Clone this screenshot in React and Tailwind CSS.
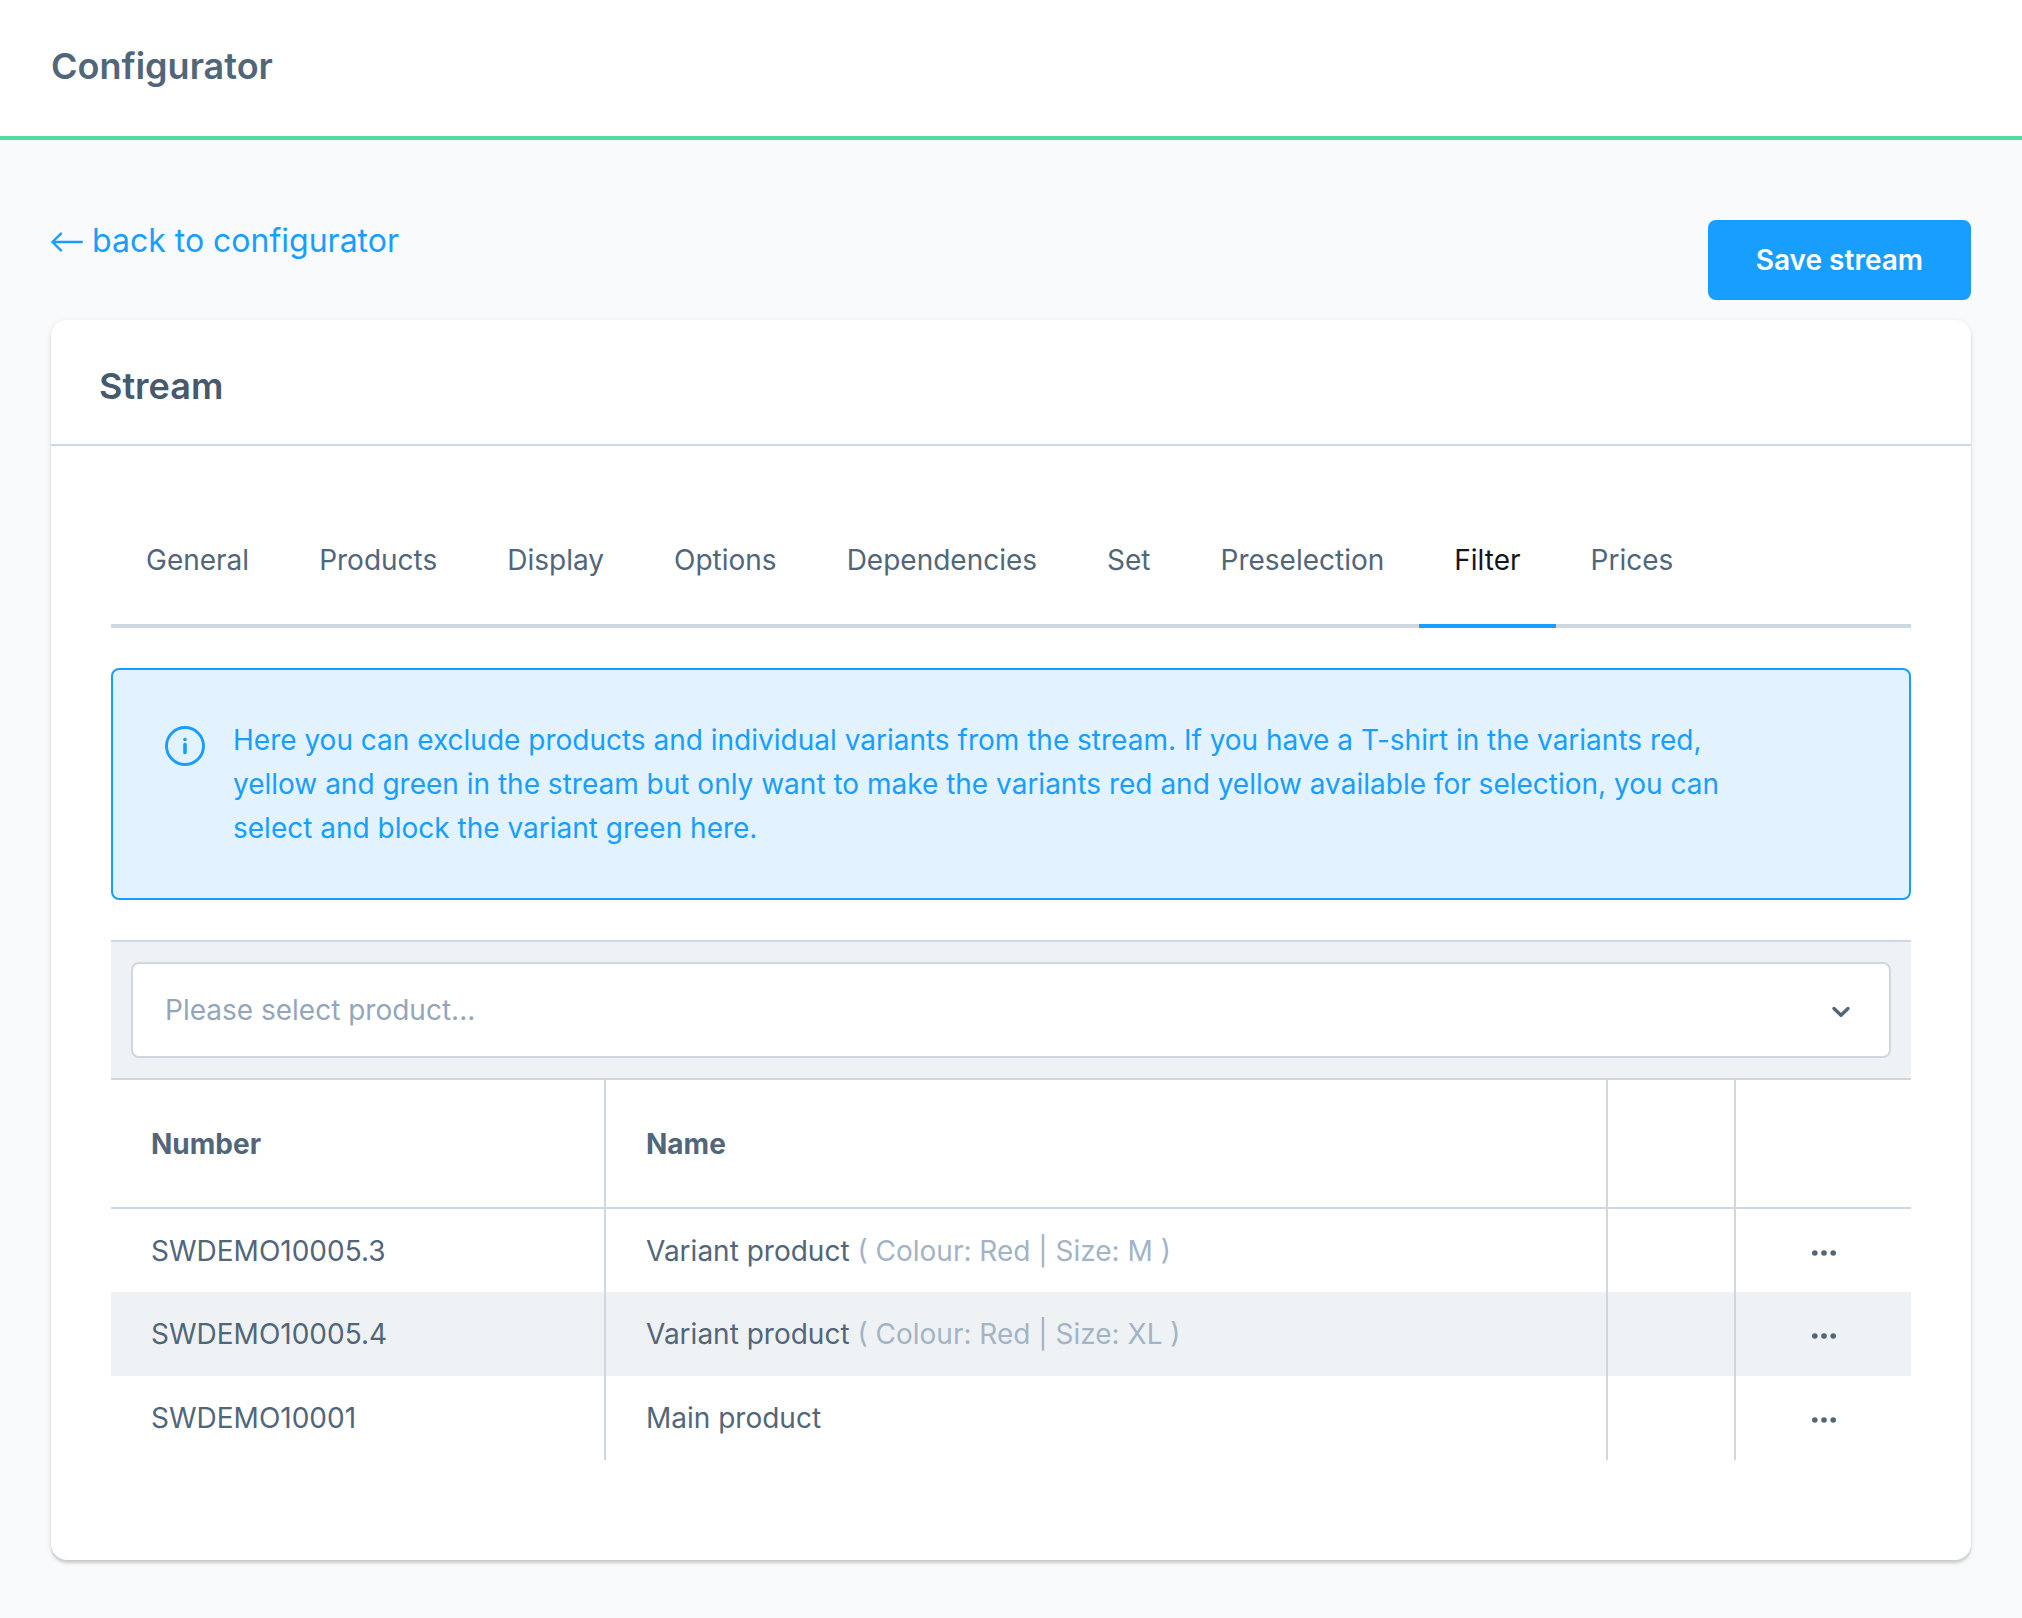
import { useState } from 'react';

const tabs = [
  'General',
  'Products',
  'Display',
  'Options',
  'Dependencies',
  'Set',
  'Preselection',
  'Filter',
  'Prices',
];

const products = [
  { number: 'SWDEMO10005.3', name: 'Variant product', options: '( Colour: Red | Size: M )' },
  { number: 'SWDEMO10005.4', name: 'Variant product', options: '( Colour: Red | Size: XL )' },
  { number: 'SWDEMO10001', name: 'Main product' },
];

function ArrowLeftIcon() {
  return (
    <svg className="h-6 w-8" viewBox="0 0 32 24" fill="none" stroke="currentColor" strokeWidth="2.4" strokeLinecap="round" strokeLinejoin="round" aria-hidden="true">
      <path d="M30.8 13H1.4M10 4.6 1.4 13l8.6 8.4" />
    </svg>
  );
}

function InfoIcon() {
  return (
    <svg className="mt-2 h-10 w-10 shrink-0" viewBox="0 0 40 40" fill="none" aria-hidden="true">
      <circle cx="20" cy="20" r="18.5" stroke="currentColor" strokeWidth="2.9" />
      <circle cx="20" cy="13.5" r="1.8" fill="currentColor" />
      <path d="M20 18.5v8" stroke="currentColor" strokeWidth="3.6" strokeLinecap="round" />
    </svg>
  );
}

function ChevronIcon() {
  return (
    <svg className="pointer-events-none absolute top-11 right-10 h-3 w-5" viewBox="0 0 20 12" fill="none" stroke="currentColor" strokeWidth="3.4" strokeLinecap="round" strokeLinejoin="round" aria-hidden="true">
      <path d="m3 2.5 7 6.8 7-6.8" />
    </svg>
  );
}

function DotsIcon() {
  return (
    <svg className="h-6 w-6" viewBox="0 0 24 24" fill="currentColor" aria-hidden="true">
      <circle cx="2.8" cy="12" r="2.8" />
      <circle cx="12" cy="12" r="2.8" />
      <circle cx="21.2" cy="12" r="2.8" />
    </svg>
  );
}

function TabBar({ active, onChange }) {
  return (
    <nav className="flex border-b-4 border-[#cfd8e0]">
      {tabs.map(tab => (
        <button
          key={tab}
          type="button"
          onClick={() => onChange(tab)}
          className={
            tab === active
              ? '-mb-1 border-b-4 border-[#189eff] px-[35px] pt-5 pb-[42px] leading-11 text-[#14171a]'
              : '-mb-1 border-b-4 border-transparent px-[35px] pt-5 pb-[42px] leading-11'
          }
        >
          {tab}
        </button>
      ))}
    </nav>
  );
}

function ProductTable() {
  return (
    <table className="w-full table-fixed text-left">
      <thead>
        <tr className="h-32 border-b-2 border-[#cfd8e0]">
          <th scope="col" className="w-[494px] border-r-2 border-[#cfd8e0] px-10 font-bold">Number</th>
          <th scope="col" className="border-r-2 border-[#cfd8e0] px-10 font-bold">Name</th>
          <td className="w-32 border-r-2 border-[#cfd8e0]" />
          <td className="w-44" />
        </tr>
      </thead>
      <tbody>
        {products.map(product => (
          <tr key={product.number} className="h-21 even:bg-[#eff2f5]">
            <td className="border-r-2 border-[#cfd8e0] px-10">{product.number}</td>
            <td className="border-r-2 border-[#cfd8e0] px-10">
              {product.name}
              {product.options && <span className="text-[#a3b4c4]"> {product.options}</span>}
            </td>
            <td className="border-r-2 border-[#cfd8e0]" />
            <td>
              <button type="button" aria-label="Actions" className="mx-auto flex pt-1">
                <DotsIcon />
              </button>
            </td>
          </tr>
        ))}
      </tbody>
    </table>
  );
}

export default function App() {
  const [activeTab, setActiveTab] = useState('Filter');

  return (
    <div className="min-h-screen bg-[#f9fafc] font-['Inter',sans-serif] text-[28px] leading-11 text-[#52667a]">
      <header className="border-b-4 border-[#57d9a3] bg-white px-[51px] pt-[42px] pb-[46px]">
        <h1 className="text-4xl leading-12 font-semibold">Configurator</h1>
      </header>

      <main className="px-[51px] pt-20 pb-14">
        <div className="flex items-start justify-between">
          <a href="#configurator" className="flex items-center gap-[9px] text-[32px] leading-[42px] text-[#189eff]">
            <ArrowLeftIcon />
            back to configurator
          </a>
          <button type="button" className="h-20 rounded-lg bg-[#189eff] px-12 font-semibold text-white">
            Save stream
          </button>
        </div>

        <section className="mt-5 rounded-2xl bg-white shadow-[0_2px_2px_rgba(0,0,0,0.08),0_4px_2px_rgba(0,0,0,0.06),0_2px_6px_rgba(0,0,0,0.1)]">
          <h2 className="border-b-2 border-[#cfd8e0] px-12 pt-[42px] pb-[34px] text-4xl leading-12 font-semibold text-[#475a6d]">
            Stream
          </h2>

          <div className="px-15 pt-18 pb-25">
            <TabBar active={activeTab} onChange={setActiveTab} />

            <div className="mt-10 flex gap-7 rounded-lg border-2 border-[#189eff] bg-[#e2f2ff] py-12 pr-40 pl-13 text-[#189eff]">
              <InfoIcon />
              <p>
                Here you can exclude products and individual variants from the stream. If you have a T-shirt in the
                variants red, yellow and green in the stream but only want to make the variants red and yellow available
                for selection, you can select and block the variant green here.
              </p>
            </div>

            <div className="mt-10 border-y-2 border-[#cfd8e0] bg-[#eff2f5] p-5">
              <div className="relative">
                <select
                  aria-label="Product"
                  defaultValue=""
                  className="block h-24 w-full appearance-none rounded-lg border-2 border-[#cfd8e0] bg-white px-8 text-[#94a6b8]"
                >
                  <option value="">Please select product...</option>
                </select>
                <ChevronIcon />
              </div>
            </div>

            <ProductTable />
          </div>
        </section>
      </main>
    </div>
  );
}
